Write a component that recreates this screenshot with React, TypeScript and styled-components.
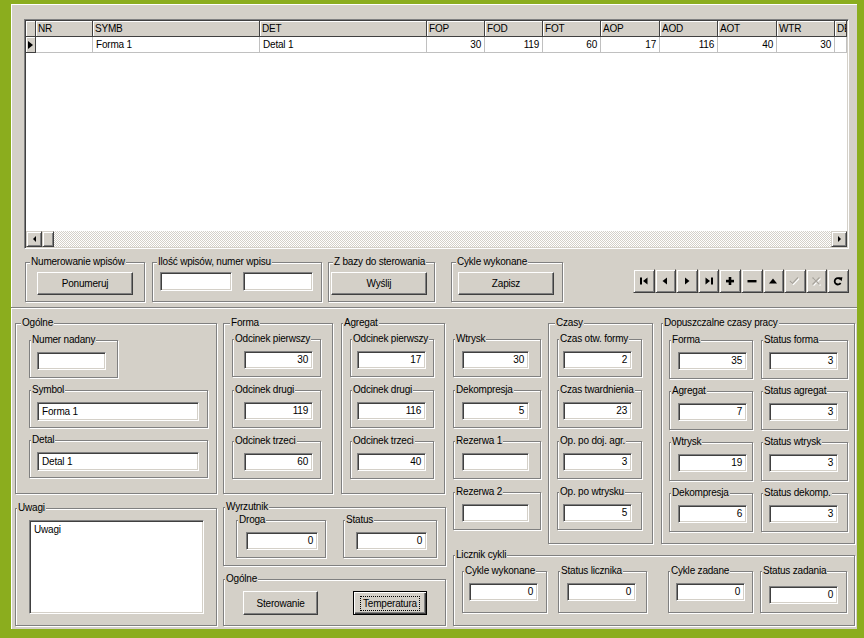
import React from 'react';
import styled, { createGlobalStyle, css } from 'styled-components';

const FACE = '#d4d0c8';
const SHADOW = '#808080';
const DARK = '#404040';
const GREEN = '#8bad1e';

const GlobalStyle = createGlobalStyle`
  * { box-sizing: border-box; }
  html, body { margin: 0; padding: 0; background: ${GREEN}; }
  body {
    font-family: "Liberation Sans", Arial, sans-serif;
    font-size: 10px;
    letter-spacing: -0.2px;
    color: #000;
  }
`;

const Screen = styled.div`
  width: 864px;
  height: 638px;
  padding: 4px 7px 9px 11px;
  background: ${GREEN};
`;

const Window = styled.div`
  width: 846px;
  height: 625px;
  background: ${FACE};
  box-shadow: inset 1px 1px #fff;
  display: flex;
  flex-direction: column;
`;

const TopPanel = styled.div`
  height: 304px;
  flex: none;
  padding: 15px 0 0 13px;
  border-bottom: 1px solid ${SHADOW};
  box-shadow: 0 1px 0 #fff;
`;

/* ---------- grid ---------- */

const Grid = styled.div`
  width: 825px;
  height: 230px;
  border: 1px solid;
  border-color: ${SHADOW} #fff #fff ${SHADOW};
  box-shadow: inset 1px 1px ${DARK}, inset -1px -1px ${FACE};
  background: #fff;
  padding: 1px;
  display: flex;
  flex-direction: column;
  overflow: hidden;
`;

const GridRow = styled.div`
  display: flex;
  height: 16px;
  flex: none;
`;

const HeadCell = styled.div<{ $w?: number }>`
  ${({ $w }) => ($w ? `width: ${$w}px; flex: none;` : 'flex: 1; min-width: 0;')}
  height: 16px;
  background: ${FACE};
  border-right: 1px solid ${DARK};
  border-bottom: 1px solid ${DARK};
  box-shadow: inset 1px 1px #fff;
  padding-left: 2px;
  line-height: 15px;
  white-space: nowrap;
  overflow: hidden;
`;

const DataCell = styled.div<{ $w?: number; $right?: boolean }>`
  ${({ $w }) => ($w ? `width: ${$w}px; flex: none;` : 'flex: 1; min-width: 0;')}
  height: 16px;
  border-right: 1px solid #c0c0c0;
  border-bottom: 1px solid #c0c0c0;
  padding: 0 3px;
  line-height: 15px;
  text-align: ${({ $right }) => ($right ? 'right' : 'left')};
  white-space: nowrap;
  overflow: hidden;
`;

const IndicatorCell = styled.div`
  width: 10px;
  flex: none;
  height: 16px;
  background: ${FACE};
  border-right: 1px solid ${DARK};
  border-bottom: 1px solid ${DARK};
  box-shadow: inset 1px 1px #fff;
  display: flex;
  align-items: center;
  justify-content: center;
`;

const RowMarker = styled.span`
  width: 0;
  height: 0;
  border-top: 4px solid transparent;
  border-bottom: 4px solid transparent;
  border-left: 5px solid #000;
`;

const GridFill = styled.div`
  flex: 1;
`;

const HScroll = styled.div`
  height: 16px;
  flex: none;
  display: flex;
  background: repeating-conic-gradient(${FACE} 0 25%, #fff 0 50%) 0 0 / 2px 2px;
`;

const Raised = css`
  background: ${FACE};
  border: 1px solid;
  border-color: ${FACE} ${DARK} ${DARK} ${FACE};
  box-shadow: inset 1px 1px #fff, inset -1px -1px ${SHADOW};
`;

const ScrollBtn = styled.div<{ $w?: number }>`
  ${Raised};
  width: ${({ $w }) => $w ?? 16}px;
  height: 16px;
  flex: none;
  display: flex;
  align-items: center;
  justify-content: center;
`;

const ScrollGap = styled.div`
  flex: 1;
`;

const Arrow = styled.span<{ $dir: 'left' | 'right' }>`
  width: 0;
  height: 0;
  border-top: 3px solid transparent;
  border-bottom: 3px solid transparent;
  ${({ $dir }) =>
    $dir === 'left' ? 'border-right: 3px solid #000;' : 'border-left: 3px solid #000;'}
`;

/* ---------- group boxes, edits, buttons ---------- */

const Box = styled.div<{
  $w: number;
  $h: number;
  $pt?: number;
  $pl?: number;
  $ml?: number;
  $gap?: number;
  $col?: boolean;
}>`
  position: relative;
  flex: none;
  width: ${({ $w }) => $w}px;
  height: ${({ $h }) => $h}px;
  margin-left: ${({ $ml }) => $ml ?? 0}px;
  padding: ${({ $pt }) => $pt ?? 11}px 0 0 ${({ $pl }) => $pl ?? 7}px;
  border: 1px solid ${SHADOW};
  box-shadow: inset 1px 1px #fff, 1px 1px 0 #fff;
  display: flex;
  flex-direction: ${({ $col }) => ($col ? 'column' : 'row')};
  align-items: flex-start;
  gap: ${({ $gap }) => $gap ?? 0}px;
`;

const Caption = styled.span<{ $cl?: number }>`
  position: absolute;
  top: -7px;
  left: ${({ $cl }) => $cl ?? 4}px;
  padding: 0 1px;
  background: ${FACE};
  line-height: 12px;
  white-space: nowrap;
`;

const Sunken = css`
  background: #fff;
  border: 1px solid;
  border-color: ${SHADOW} #fff #fff ${SHADOW};
  box-shadow: inset 1px 1px ${DARK}, inset -1px -1px ${FACE};
`;

const Edit = styled.div<{ $w: number; $h?: number; $left?: boolean }>`
  ${Sunken};
  flex: none;
  width: ${({ $w }) => $w}px;
  height: ${({ $h }) => $h ?? 18}px;
  padding: 0 4px;
  line-height: ${({ $h }) => ($h ?? 18) - 2}px;
  text-align: ${({ $left }) => ($left ? 'left' : 'right')};
  white-space: nowrap;
  overflow: hidden;
`;

const Memo = styled.div`
  ${Sunken};
  width: 175px;
  height: 94px;
  padding: 3px 4px;
  line-height: 12px;
`;

const Button = styled.button<{ $w: number; $h?: number; $default?: boolean }>`
  flex: none;
  width: ${({ $w }) => $w}px;
  height: ${({ $h }) => $h ?? 23}px;
  margin: 0;
  padding: 0;
  font: inherit;
  letter-spacing: inherit;
  color: #000;
  background: ${FACE};
  border: 1px solid;
  border-color: #fff ${DARK} ${DARK} #fff;
  box-shadow: inset -1px -1px ${SHADOW};
  display: flex;
  align-items: center;
  justify-content: center;
  ${({ $default }) =>
    $default &&
    css`
      border-color: #000;
      box-shadow: inset 1px 1px #fff, inset -1px -1px ${DARK}, inset -2px -2px ${SHADOW};
    `}
`;

const FocusText = styled.span`
  border: 1px dotted #000;
  padding: 1px 2px;
  line-height: 11px;
`;

/* ---------- layout ---------- */

const Toolbar = styled.div`
  display: flex;
  align-items: flex-start;
  margin: 13px 0 0 1px;
`;

const Navigator = styled.div`
  display: flex;
  width: 216px;
  height: 24px;
  margin: 7px 0 0 70px;
`;

const NavBtn = styled.div`
  ${Raised};
  flex: 1;
  height: 24px;
  display: flex;
  align-items: center;
  justify-content: center;
`;

const BottomPanel = styled.div`
  flex: 1;
  display: flex;
  align-items: flex-start;
  padding: 15px 0 0 4px;
`;

const Column = styled.div<{ $w: number; $ml?: number; $gap?: number; $pt?: number }>`
  flex: none;
  width: ${({ $w }) => $w}px;
  margin-left: ${({ $ml }) => $ml ?? 0}px;
  padding-top: ${({ $pt }) => $pt ?? 0}px;
  display: flex;
  flex-direction: column;
  align-items: flex-start;
  gap: ${({ $gap }) => $gap ?? 0}px;
`;

const Row = styled.div<{ $gap?: number }>`
  display: flex;
  align-items: flex-start;
  gap: ${({ $gap }) => $gap ?? 0}px;
`;

const Pairs = styled.div`
  display: grid;
  grid-template-columns: 84px 87px;
  column-gap: 8px;
  row-gap: 12px;
`;

interface FieldProps {
  label: string;
  value?: string;
  w: number;
  h?: number;
  ew?: number;
  eh?: number;
  pl?: number;
  pt?: number;
  ml?: number;
  left?: boolean;
}

const Field: React.FC<FieldProps> = ({
  label,
  value = '',
  w,
  h = 38,
  ew = 69,
  eh = 18,
  pl = 7,
  pt = 11,
  ml = 0,
  left,
}) => (
  <Box $w={w} $h={h} $pl={pl} $pt={pt} $ml={ml}>
    <Caption $cl={1}>{label}</Caption>
    <Edit $w={ew} $h={eh} $left={left}>
      {value}
    </Edit>
  </Box>
);

/* ---------- data ---------- */

const columns = [
  { name: 'NR', w: 57 },
  { name: 'SYMB', w: 167 },
  { name: 'DET', w: 167 },
  { name: 'FOP', w: 58 },
  { name: 'FOD', w: 58 },
  { name: 'FOT', w: 58 },
  { name: 'AOP', w: 59 },
  { name: 'AOD', w: 58 },
  { name: 'AOT', w: 59 },
  { name: 'WTR', w: 58 },
  { name: 'DEK', w: 0 },
];

const record = ['', 'Forma 1', 'Detal 1', '30', '119', '60', '17', '116', '40', '30', ''];

const forma = [
  ['Odcinek pierwszy', '30'],
  ['Odcinek drugi', '119'],
  ['Odcinek trzeci', '60'],
];
const agregat = [
  ['Odcinek pierwszy', '17'],
  ['Odcinek drugi', '116'],
  ['Odcinek trzeci', '40'],
];
const wtrysk = [
  ['Wtrysk', '30'],
  ['Dekompresja', '5'],
  ['Rezerwa 1', ''],
  ['Rezerwa 2', ''],
];
const czasy = [
  ['Czas otw. formy', '2'],
  ['Czas twardnienia', '23'],
  ['Op. po doj. agr.', '3'],
  ['Op. po wtrysku', '5'],
];
const limits = [
  ['Forma', '35', 'Status forma', '3'],
  ['Agregat', '7', 'Status agregat', '3'],
  ['Wtrysk', '19', 'Status wtrysk', '3'],
  ['Dekompresja', '6', 'Status dekomp.', '3'],
];

const navIcons = [
  <svg width="10" height="10" viewBox="0 0 10 10" key="first">
    <rect x="1" y="1.5" width="2" height="7" fill="#000" />
    <polygon points="8.5,1.5 4,5 8.5,8.5" fill="#000" />
  </svg>,
  <svg width="10" height="10" viewBox="0 0 10 10" key="prior">
    <polygon points="7,1.5 2.5,5 7,8.5" fill="#000" />
  </svg>,
  <svg width="10" height="10" viewBox="0 0 10 10" key="next">
    <polygon points="3,1.5 7.5,5 3,8.5" fill="#000" />
  </svg>,
  <svg width="10" height="10" viewBox="0 0 10 10" key="last">
    <polygon points="1.5,1.5 6,5 1.5,8.5" fill="#000" />
    <rect x="7" y="1.5" width="2" height="7" fill="#000" />
  </svg>,
  <svg width="10" height="10" viewBox="0 0 10 10" key="insert">
    <rect x="1" y="3.8" width="8" height="2.6" fill="#000" />
    <rect x="3.7" y="1" width="2.6" height="8" fill="#000" />
  </svg>,
  <svg width="10" height="10" viewBox="0 0 10 10" key="delete">
    <rect x="0.5" y="4" width="9" height="2.4" fill="#000" />
  </svg>,
  <svg width="10" height="10" viewBox="0 0 10 10" key="edit">
    <polygon points="1,7.5 5,2.5 9,7.5" fill="#000" />
  </svg>,
  <svg width="11" height="10" viewBox="0 0 11 10" key="post">
    <polyline points="2,6 4.5,8.5 10,2.5" fill="none" stroke="#fff" strokeWidth="1.2" />
    <polyline points="1,5 3.5,7.5 9,1.5" fill="none" stroke="#a8a49c" strokeWidth="1.2" />
  </svg>,
  <svg width="11" height="10" viewBox="0 0 11 10" key="cancel">
    <path d="M2.5 2.5 L9.5 9.5 M9.5 2.5 L2.5 9.5" stroke="#fff" strokeWidth="1.3" />
    <path d="M1.5 1.5 L8.5 8.5 M8.5 1.5 L1.5 8.5" stroke="#a8a49c" strokeWidth="1.3" />
  </svg>,
  <svg width="10" height="10" viewBox="0 0 10 10" key="refresh">
    <path d="M7.3 3.2 A3.2 3.2 0 1 0 7.6 7" fill="none" stroke="#000" strokeWidth="1.8" />
    <polygon points="5.2,1.6 9.4,1.2 8.6,5.2" fill="#000" />
  </svg>,
];

export default function App() {
  return (
    <>
      <GlobalStyle />
      <Screen>
        <Window>
          <TopPanel>
            <Grid>
              <GridRow>
                <IndicatorCell />
                {columns.map((c) => (
                  <HeadCell key={c.name} $w={c.w || undefined}>
                    {c.name}
                  </HeadCell>
                ))}
              </GridRow>
              <GridRow>
                <IndicatorCell>
                  <RowMarker />
                </IndicatorCell>
                {columns.map((c, i) => (
                  <DataCell key={c.name} $w={c.w || undefined} $right={i >= 3}>
                    {record[i]}
                  </DataCell>
                ))}
              </GridRow>
              <GridFill />
              <HScroll>
                <ScrollBtn>
                  <Arrow $dir="left" />
                </ScrollBtn>
                <ScrollBtn $w={12} />
                <ScrollGap />
                <ScrollBtn>
                  <Arrow $dir="right" />
                </ScrollBtn>
              </HScroll>
            </Grid>

            <Toolbar>
              <Box $w={120} $h={40} $pt={9} $pl={11}>
                <Caption>Numerowanie wpisów</Caption>
                <Button $w={96}>Ponumeruj</Button>
              </Box>
              <Box $w={170} $h={40} $pt={9} $pl={7} $ml={7} $gap={11}>
                <Caption>Ilość wpisów, numer wpisu</Caption>
                <Edit $w={72} $h={19} />
                <Edit $w={70} $h={19} />
              </Box>
              <Box $w={107} $h={40} $pt={9} $pl={2} $ml={6}>
                <Caption>Z bazy do sterowania</Caption>
                <Button $w={96}>Wyślij</Button>
              </Box>
              <Box $w={112} $h={40} $pt={9} $pl={6} $ml={16}>
                <Caption>Cykle wykonane</Caption>
                <Button $w={96}>Zapisz</Button>
              </Box>
              <Navigator>
                {navIcons.map((icon, i) => (
                  <NavBtn key={i}>{icon}</NavBtn>
                ))}
              </Navigator>
            </Toolbar>
          </TopPanel>

          <BottomPanel>
            <Column $w={202} $gap={14}>
              <Box $w={202} $h={171} $col $pt={16} $pl={13} $gap={12}>
                <Caption $cl={5}>Ogólne</Caption>
                <Field label="Numer nadany" w={89} />
                <Field label="Symbol" value="Forma 1" w={179} ew={162} eh={19} left />
                <Field label="Detal" value="Detal 1" w={179} ew={162} eh={19} left />
              </Box>
              <Box $w={202} $h={118} $pt={11} $pl={13}>
                <Caption $cl={1}>Uwagi</Caption>
                <Memo>Uwagi</Memo>
              </Box>
            </Column>

            <Column $w={223} $ml={6} $gap={13}>
              <Row $gap={8}>
                <Box $w={110} $h={171} $col $pt={15} $pl={8} $gap={13}>
                  <Caption $cl={6}>Forma</Caption>
                  {forma.map(([l, v]) => (
                    <Field key={l} label={l} value={v} w={89} pl={11} />
                  ))}
                </Box>
                <Box $w={104} $h={171} $col $pt={15} $pl={8} $gap={13}>
                  <Caption $cl={1}>Agregat</Caption>
                  {agregat.map(([l, v]) => (
                    <Field key={l} label={l} value={v} w={84} pl={6} />
                  ))}
                </Box>
              </Row>
              <Box $w={223} $h={59} $pt={12} $pl={12} $gap={17}>
                <Caption $cl={1}>Wyrzutnik</Caption>
                <Field label="Droga" value="0" w={90} ew={72} eh={18} pl={9} />
                <Field label="Status" value="0" w={94} ew={71} eh={18} pl={12} />
              </Box>
              <Box $w={223} $h={47} $pt={11} $pl={19} $gap={35}>
                <Caption $cl={1}>Ogólne</Caption>
                <Button $w={75} $h={24}>
                  Sterowanie
                </Button>
                <Button $w={74} $h={24} $default>
                  <FocusText>Temperatura</FocusText>
                </Button>
              </Box>
            </Column>

            <Column $w={402} $ml={7} $gap={11}>
              <Row>
                <Column $w={88} $pt={16} $gap={13}>
                  {wtrysk.map(([l, v]) => (
                    <Field key={l} label={l} value={v} w={88} ew={67} pl={8} />
                  ))}
                </Column>
                <Box $w={105} $h={221} $col $pt={15} $pl={8} $ml={7} $gap={13}>
                  <Caption $cl={6}>Czasy</Caption>
                  {czasy.map(([l, v]) => (
                    <Field key={l} label={l} value={v} w={85} pl={5} />
                  ))}
                </Box>
                <Box $w={194} $h={221} $pt={16} $pl={7} $ml={8}>
                  <Caption $cl={1}>Dopuszczalne czasy pracy</Caption>
                  <Pairs>
                    {limits.map(([l1, v1, l2, v2]) => (
                      <React.Fragment key={l1}>
                        <Field label={l1} value={v1} w={84} h={39} pl={8} />
                        <Field label={l2} value={v2} w={87} h={39} pl={7} />
                      </React.Fragment>
                    ))}
                  </Pairs>
                </Box>
              </Row>
              <Box $w={402} $h={71} $pt={15} $pl={8}>
                <Caption $cl={1}>Licznik cykli</Caption>
                <Field label="Cykle wykonane" value="0" w={85} h={42} eh={18} pl={6} />
                <Field label="Status licznika" value="0" w={89} h={42} eh={18} pl={8} ml={11} />
                <Field label="Cykle zadane" value="0" w={85} h={42} eh={18} pl={7} ml={21} />
                <Field label="Status zadania" value="0" w={87} h={42} eh={18} pl={8} pt={14} ml={7} />
              </Box>
            </Column>
          </BottomPanel>
        </Window>
      </Screen>
    </>
  );
}
